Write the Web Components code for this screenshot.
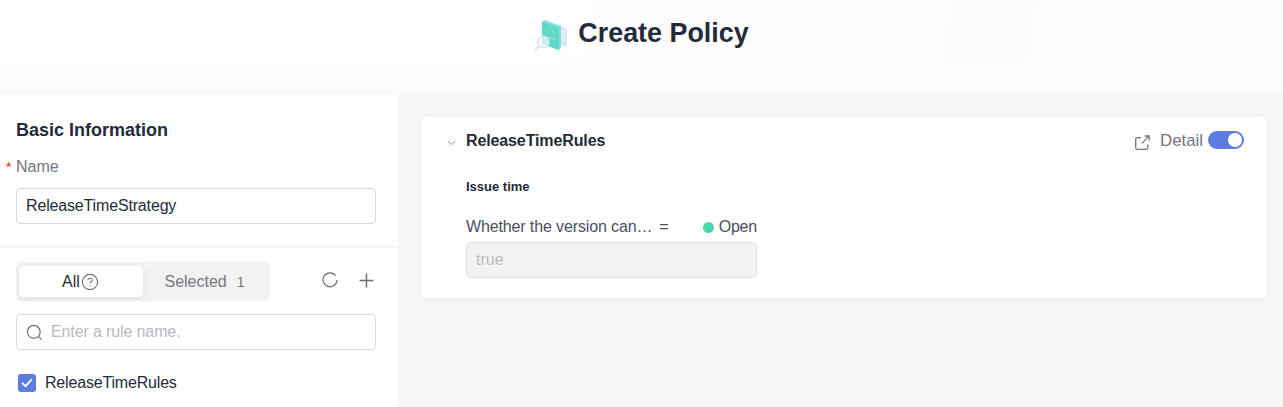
<!DOCTYPE html>
<html>
<head>
<meta charset="utf-8">
<title>Create Policy</title>
<style>
html, body { margin: 0; height: 100%; }
body { font-family: "Liberation Sans", Arial, sans-serif; color: #252b3a; background: #f6f6f8; overflow: hidden; }
</style>
</head>
<body>
<policy-page>
  <policy-header slot="header">Create Policy</policy-header>
  <policy-sidebar slot="side"></policy-sidebar>
  <rule-card slot="main" name="ReleaseTimeRules"></rule-card>
</policy-page>

<script>
// create policy page: header, left form column, rule card

class PolicyPage extends HTMLElement {
  constructor() {
    super();
    this.attachShadow({ mode: 'open' }).innerHTML = `
<style>
:host { display: grid; grid-template-columns: 398px 1fr; grid-template-rows: 94px 1fr; height: 407px; width: 1283px; }
.top { grid-column: 1 / 3; }
.main { padding: 23px 16px 0 23px; }
</style>
<div class="top"><slot name="header"></slot></div>
<div><slot name="side"></slot></div>
<div class="main"><slot name="main"></slot></div>`;
  }
}

class PolicyHeader extends HTMLElement {
  constructor() {
    super();
    this.attachShadow({ mode: 'open' }).innerHTML = `
<style>
:host { display: flex; justify-content: center; height: 94px; box-sizing: border-box; padding-top: 15px;
  background: linear-gradient(180deg, rgba(251,252,254,0) 62%, #fbfcfe 95%, #f8f8fb 100%),
    linear-gradient(100deg, #fff 42%, #fbfbfe 75%, #fcfcfe 100%); }
.row { display: flex; align-items: flex-start; gap: 10px; height: 36px; }
h1 { margin: 0; font-size: 26.9px; line-height: 36px; font-weight: 700; color: #252b3a; }
svg { display: block; margin-top: 2px; }
</style>
<div class="row">
  <svg width="34" height="34" viewBox="0 0 34 34">
    <path d="M21 8 L33 12 V30 L21 26 Z" fill="#dfe5ee"/>
    <path d="M27 13 l4 1.3 M27 16 l4 1.3 M27 19 l4 1.3 M27 22 l4 1.3" stroke="#f6f8fb" stroke-width="1"/>
    <path d="M8 5 L10 3 L27 9 V31 L25 33 L8 27 Z" fill="#7fe2d5"/>
    <path d="M8 5 L25 11 V33 L8 27 Z" fill="#5fd8c8"/>
    <path d="M14 13 l1.4 .5 M18 14.5 l1.4 .5 M13 20 l8 2.8" stroke="#9ee9de" stroke-width="1.3"/>
    <circle cx="9" cy="25" r="5.5" fill="#eef3f8" fill-opacity=".75" stroke="#e2e6ee" stroke-width="2"/>
    <path d="M5 29 L1.5 32.5" stroke="#e2e6ee" stroke-width="2.4" stroke-linecap="round"/>
  </svg>
  <h1><slot></slot></h1>
</div>`;
  }
}

class PolicyField extends HTMLElement {
  constructor() {
    super();
    const ph = this.hasAttribute('placeholder');
    this.attachShadow({ mode: 'open' }).innerHTML = `
<style>
:host { display: flex; align-items: center; gap: 8px; box-sizing: border-box; height: 36px; padding: 0 9px;
  border: 1px solid #d9d9dc; border-radius: 4px; background: #fff; font-size: 16px; color: #252b3a; }
:host([disabled]) { background: #f3f3f4; border-color: #e3e3e7; color: #bbbbc0; }
.ph { color: #b9b9bf; }
span { letter-spacing: var(--track, 0); }
svg { display: block; flex: none; margin-left: -2px; }
</style>
<slot name="icon"></slot>
<span class="${ph ? 'ph' : ''}">${ph ? this.getAttribute('placeholder') : this.getAttribute('value') || ''}</span>`;
  }
}

class SegTabs extends HTMLElement {
  constructor() {
    super();
    this.attachShadow({ mode: 'open' }).innerHTML = `
<style>
:host { display: flex; box-sizing: border-box; width: 254px; height: 39px; padding: 4px 3px; background: #f2f2f3; border-radius: 5px; font-size: 16px; }
.tab { display: flex; align-items: center; justify-content: center; height: 31px; }
.on { width: 124px; background: #fff; border-radius: 4px; color: #252b3a; gap: 1px; padding-right: 1px; box-sizing: border-box; box-shadow: 0 2px 6px rgba(0,0,0,.08); }
.off { flex: 1; color: #75757f; padding-right: 1px; box-sizing: border-box; }
.num { font-size: 14px; margin-left: 10px; }
svg { display: block; }
</style>
<div class="tab on">All
  <svg width="18" height="18" viewBox="0 0 18 18" fill="none" stroke="#6b6f7a">
    <circle cx="9" cy="9" r="7.6" stroke-width="1.1"/>
    <path d="M6.9 7.2a2.1 2.1 0 1 1 3.2 1.8c-.7.4-1.1.8-1.1 1.6" stroke-width="1.1"/>
    <circle cx="9" cy="12.8" r=".6" fill="#6b6f7a" stroke="none"/>
  </svg>
</div>
<div class="tab off">Selected<span class="num">1</span></div>`;
  }
}

class PolicySidebar extends HTMLElement {
  constructor() {
    super();
    this.attachShadow({ mode: 'open' }).innerHTML = `
<style>
:host { display: block; background: #fff; height: 313px; }
.basic { padding: 26px 22px 22px 16px; border-bottom: 2px solid #f5f5f7; }
h2 { margin: 0; font-size: 18px; line-height: 20px; font-weight: 700; color: #252b3a; }
.lbl { position: relative; margin: 17px 0 11px; font-size: 16px; line-height: 20px; color: #75757f; }
.lbl i { position: absolute; left: -10px; top: 0; font-style: normal; color: #f5222d; font-size: 14px; }
.rules { padding: 14px 22px 0 16px; }
.bar { display: flex; align-items: center; justify-content: space-between; padding-right: 2px; }
.tools { display: flex; align-items: center; gap: 21px; margin-top: -3px; }
.tools svg { display: block; }
policy-field { --track: -.16px; }
.rules policy-field { margin-top: 13px; --track: -.12px; }
.check { display: flex; align-items: center; gap: 9px; margin: 24px 0 0 2px; font-size: 16px; letter-spacing: -.18px; line-height: 18px; color: #252b3a; }
.box { width: 18px; height: 18px; border-radius: 3px; background: #5e7ce0; display: flex; align-items: center; justify-content: center; }
</style>
<div class="basic">
  <h2>Basic Information</h2>
  <div class="lbl"><i>*</i>Name</div>
  <policy-field value="ReleaseTimeStrategy"></policy-field>
</div>
<div class="rules">
  <div class="bar">
    <seg-tabs></seg-tabs>
    <div class="tools">
      <svg width="16" height="16" viewBox="0 0 16 16" fill="none" stroke="#6b6f7a" stroke-width="1.2"><path d="M13.6 3.6A7 7 0 1 0 15 8"/></svg>
      <svg width="15" height="15" viewBox="0 0 15 15" fill="none" stroke="#6b6f7a" stroke-width="1.5"><path d="M7.5 .5v14M.5 7.5h14"/></svg>
    </div>
  </div>
  <policy-field placeholder="Enter a rule name.">
    <svg slot="icon" width="17" height="17" viewBox="0 0 17 17" fill="none" stroke="#6b6f7a" stroke-width="1.2"><circle cx="7.8" cy="7.8" r="6.4"/><path d="M12.5 12.5 15.6 15.6"/></svg>
  </policy-field>
  <label class="check">
    <span class="box"><svg width="12" height="10" viewBox="0 0 12 10" fill="none" stroke="#fff" stroke-width="1.8"><path d="M1.2 5 4.6 8.2 10.8 1.4"/></svg></span>
    ReleaseTimeRules
  </label>
</div>`;
  }
}

class RuleCard extends HTMLElement {
  constructor() {
    super();
    this.attachShadow({ mode: 'open' }).innerHTML = `
<style>
:host { display: block; box-sizing: border-box; height: 181px; background: #fff; border-radius: 5px; box-shadow: 0 2px 8px rgba(0,0,0,.05); }
.head { display: flex; align-items: center; height: 48px; padding: 0 23px 0 26px; }
.head svg { display: block; }
.head b { font-size: 16px; letter-spacing: -.12px; margin-left: 10px; color: #252b3a; }
.right { margin-left: auto; display: flex; align-items: center; color: #75757f; font-size: 16.8px; }
.sw { width: 36px; height: 18px; border-radius: 9px; background: #5e7ce0; margin-left: 5px; margin-top: -3px; position: relative; }
.sw::after { content: ""; position: absolute; right: 2px; top: 2px; width: 14px; height: 14px; border-radius: 50%; background: #fff; }
.body { padding: 0 0 0 45px; width: 291px; }
h3 { margin: 0; padding-top: 14px; font-size: 13px; line-height: 16px; font-weight: 700; color: #252b3a; }
.row { display: flex; align-items: center; margin-top: 22px; height: 20px; margin-bottom: 5px; font-size: 16px; color: #4c4f5a; }
.row .txt { letter-spacing: -.13px; }
.row .eq { margin-left: 7px; }
.st { margin-left: auto; display: flex; align-items: center; gap: 5px; letter-spacing: -.2px; }
.dot { width: 11px; height: 11px; border-radius: 50%; background: #50d4ab; }
</style>
<div class="head">
  <svg width="9" height="6" viewBox="0 0 9 6" fill="none" stroke="#8a8e99" stroke-width="1" style="margin-top:3px"><path d="M.8 1 4.5 4.7 8.2 1"/></svg>
  <b>${this.getAttribute('name')}</b>
  <div class="right">
    <svg width="15" height="15" viewBox="0 0 15 15" fill="none" stroke="#75757f" stroke-width="1.3" style="margin-right:10px;margin-top:2px"><path d="M6 2.6H2.2C1.3 2.6.7 3.2.7 4.1v8.7c0 .9.6 1.5 1.5 1.5h9.1c.9 0 1.5-.6 1.5-1.5V9.4"/><path d="M7 8.4 13.6 1.4M9.6 1h4.6v4.6"/></svg>
    Detail
    <span class="sw"></span>
  </div>
</div>
<div class="body">
  <h3>Issue time</h3>
  <div class="row"><span class="txt">Whether the version can…</span><span class="eq">=</span><span class="st"><span class="dot"></span>Open</span></div>
  <policy-field value="true" disabled></policy-field>
</div>`;
  }
}

customElements.define('policy-page', PolicyPage);
customElements.define('policy-header', PolicyHeader);
customElements.define('policy-field', PolicyField);
customElements.define('seg-tabs', SegTabs);
customElements.define('policy-sidebar', PolicySidebar);
customElements.define('rule-card', RuleCard);
</script>
</body>
</html>
